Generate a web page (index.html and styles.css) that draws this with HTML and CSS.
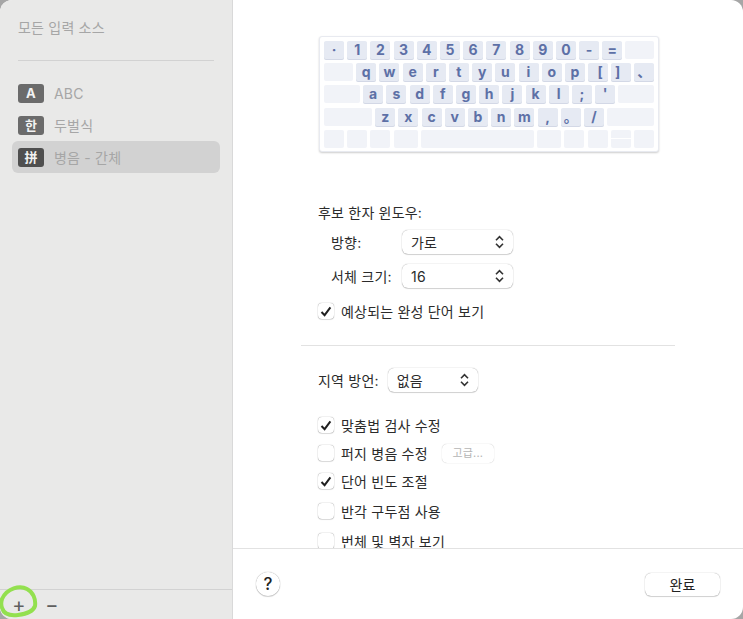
FILE: index.html
```html
<!DOCTYPE html>
<html lang="ko">
<head>
  <meta charset="UTF-8">
  <title>입력 소스</title>
  <link rel="stylesheet" href="styles.css">
</head>
<body>
  <div class="window">
    <aside class="sidebar">
      <div class="sidebar-title">모든 입력 소스</div>
      <div class="sidebar-rule"></div>
      <ul class="source-list">
        <li class="source"><span class="badge">A</span>ABC</li>
        <li class="source"><span class="badge">한</span>두벌식</li>
        <li class="source selected"><span class="badge">拼</span>병음 - 간체</li>
      </ul>
      <div class="sidebar-tools">
        <span class="tool">+</span>
        <span class="tool">−</span>
      </div>
      <svg class="marker" width="40" height="36" viewBox="0 0 40 36">
        <path d="M2 16 C7 5 20 2 27 6 C33 9 36 16 35 23 C33 29 26 31 18 32 C10 33 4 31 2 25 C1 22 1 19 2 16" fill="none" stroke="#93e04f" stroke-width="4" stroke-linecap="round"/>
      </svg>
    </aside>

    <main class="main">
      <div class="content">
        <div class="keyboard">
          <div class="kb-row">
            <span class="key">·</span><span class="key">1</span><span class="key">2</span><span class="key">3</span><span class="key">4</span><span class="key">5</span><span class="key">6</span><span class="key">7</span><span class="key">8</span><span class="key">9</span><span class="key">0</span><span class="key">-</span><span class="key">=</span><span class="key blank grow"></span>
          </div>
          <div class="kb-row">
            <span class="key blank w29"></span><span class="key">q</span><span class="key">w</span><span class="key">e</span><span class="key">r</span><span class="key">t</span><span class="key">y</span><span class="key">u</span><span class="key">i</span><span class="key">o</span><span class="key">p</span><span class="key bracket-l">[</span><span class="key bracket-r">]</span><span class="key grow">、</span>
          </div>
          <div class="kb-row">
            <span class="key blank w36"></span><span class="key">a</span><span class="key">s</span><span class="key">d</span><span class="key">f</span><span class="key">g</span><span class="key">h</span><span class="key">j</span><span class="key">k</span><span class="key">l</span><span class="key">;</span><span class="key">'</span><span class="key blank grow"></span>
          </div>
          <div class="kb-row">
            <span class="key blank w48"></span><span class="key">z</span><span class="key">x</span><span class="key">c</span><span class="key">v</span><span class="key">b</span><span class="key">n</span><span class="key">m</span><span class="key">,</span><span class="key">。</span><span class="key">/</span><span class="key blank grow"></span>
          </div>
          <div class="kb-row">
            <span class="key blank"></span><span class="key blank"></span><span class="key blank"></span><span class="key blank w24"></span><span class="key blank grow"></span><span class="key blank w24"></span><span class="key blank"></span><span class="key blank"></span>
            <span class="key blank split"></span><span class="key blank"></span>
          </div>
        </div>

        <div class="section-label">후보 한자 윈도우:</div>
        <div class="field">
          <span class="field-label">방향:</span>
          <span class="select wide">가로<svg class="updown" width="9" height="14" viewBox="0 0 9 14"><path d="M1 5.2 4.5 1.6 8 5.2M1 8.8 4.5 12.4 8 8.8" fill="none" stroke="#333" stroke-width="1.6"/></svg></span>
        </div>
        <div class="field">
          <span class="field-label">서체 크기:</span>
          <span class="select wide">16<svg class="updown" width="9" height="14" viewBox="0 0 9 14"><path d="M1 5.2 4.5 1.6 8 5.2M1 8.8 4.5 12.4 8 8.8" fill="none" stroke="#333" stroke-width="1.6"/></svg></span>
        </div>
        <label class="check first"><span class="box on"><svg width="12" height="11" viewBox="0 0 12 11"><path d="M1.5 6 4.6 9.2 10.4 1.4" fill="none" stroke="#1f1f1f" stroke-width="2"/></svg></span>예상되는 완성 단어 보기</label>

        <div class="rule"></div>

        <div class="dialect">
          <span>지역 방언:</span>
          <span class="select narrow">없음<svg class="updown" width="9" height="14" viewBox="0 0 9 14"><path d="M1 5.2 4.5 1.6 8 5.2M1 8.8 4.5 12.4 8 8.8" fill="none" stroke="#333" stroke-width="1.6"/></svg></span>
        </div>

        <div class="checks">
          <label class="check"><span class="box on"><svg width="12" height="11" viewBox="0 0 12 11"><path d="M1.5 6 4.6 9.2 10.4 1.4" fill="none" stroke="#1f1f1f" stroke-width="2"/></svg></span>맞춤법 검사 수정</label>
          <label class="check"><span class="box"></span>퍼지 병음 수정<span class="small-btn">고급...</span></label>
          <label class="check"><span class="box on"><svg width="12" height="11" viewBox="0 0 12 11"><path d="M1.5 6 4.6 9.2 10.4 1.4" fill="none" stroke="#1f1f1f" stroke-width="2"/></svg></span>단어 빈도 조절</label>
          <label class="check tall"><span class="box"></span>반각 구두점 사용</label>
          <label class="check tall"><span class="box"></span>번체 및 벽자 보기</label>
        </div>
      </div>

      <footer class="footer">
        <span class="help">?</span>
        <span class="done">완료</span>
      </footer>
    </main>
  </div>
</body>
</html>
```

FILE: styles.css
```css
* {
  box-sizing: border-box;
}
body {
  margin: 0;
  width: 743px;
  height: 619px;
  overflow: hidden;
  background-color: #a6a6a6;
  font-family: "Inter", "Noto Sans CJK KR", sans-serif;
  font-size: 14px;
  letter-spacing: 0.2px;
  color: #2b2b2b;
}
.window {
  display: flex;
  height: 619px;
  border-radius: 12px;
  overflow: hidden;
  background-color: white;
}

/* sidebar */
.sidebar {
  position: relative;
  display: flex;
  flex-direction: column;
  width: 233px;
  flex: none;
  background-color: #e9e9e8;
  border-right: 1px solid #d9d9d9;
}
.sidebar-title {
  margin: 18px 18px 0;
  line-height: 20px;
  color: #a6a6a6;
}
.sidebar-rule {
  height: 1px;
  margin: 22px 18px 0;
  background-color: #d2d2d2;
}
.source-list {
  list-style: none;
  margin: 16px 0 0;
  padding: 0 12px;
  flex: 1;
}
.source {
  display: flex;
  align-items: center;
  height: 32px;
  padding-left: 6px;
  color: #a6a6a6;
  border-radius: 6px;
}
.source.selected {
  background-color: #d2d2d2;
}
.badge {
  width: 26px;
  height: 19px;
  margin-right: 10px;
  border-radius: 3px;
  background-color: #6b6b6b;
  color: #f2f2f2;
  font-size: 13px;
  font-weight: 700;
  line-height: 19px;
  text-align: center;
}
.selected .badge {
  background-color: #4f4f4f;
}
.sidebar-tools {
  display: flex;
  align-items: center;
  height: 30px;
  border-top: 1px solid #d2d2d2;
  padding-left: 12px;
  gap: 19px;
}
.tool {
  width: 14px;
  font-size: 20px;
  line-height: 28px;
  text-align: center;
  color: #5f5f5f;
}
.marker {
  position: absolute;
  left: 0;
  bottom: 0;
}

/* main pane */
.main {
  flex: 1;
  display: flex;
  flex-direction: column;
  min-width: 0;
}
.content {
  height: 548px;
  overflow: hidden;
  padding: 36px 68px 0 68px;
}
.footer {
  display: flex;
  align-items: center;
  justify-content: space-between;
  height: 71px;
  border-top: 1px solid #e2e2e2;
  padding: 0 23px 0 23px;
}
.help {
  width: 24px;
  height: 24px;
  border-radius: 50%;
  background-color: white;
  box-shadow: 0 0 1px rgba(0,0,0,0.45), 0 1px 1px rgba(0,0,0,0.15);
  font-size: 17px;
  font-weight: 500;
  line-height: 24px;
  text-align: center;
  color: #222;
}
.done {
  width: 75px;
  height: 23px;
  border-radius: 6px;
  background-color: white;
  box-shadow: 0 0 1px rgba(0,0,0,0.45), 0 1px 1px rgba(0,0,0,0.15);
  line-height: 23px;
  text-align: center;
  color: #222;
}

/* keyboard picture */
.keyboard {
  display: flex;
  flex-direction: column;
  gap: 4.2px;
  width: 340px;
  height: 116px;
  margin-left: 18px;
  padding: 4px 4px 0;
  border: 1px solid #e8eaf0;
  border-radius: 3px;
  background-color: white;
  box-shadow: 0 1px 2px rgba(0,0,0,0.2);
}
.kb-row {
  display: flex;
  gap: 3.2px;
  height: 18px;
}
.key {
  flex: none;
  width: 20px;
  height: 18px;
  border-radius: 2px;
  background-color: #e6eaf3;
  box-shadow: 0 1px 0 #d3d8e6;
  color: #5d70a6;
  font-family: "Inter", "Liberation Sans", "Noto Sans CJK KR", sans-serif;
  font-size: 14px;
  font-weight: 700;
  line-height: 18px;
  letter-spacing: 0;
  text-align: center;
}
.key.blank {
  background-color: #f1f3f8;
  box-shadow: none;
}
.key.grow {
  flex: 1;
}
.key.w24 {
  width: 24px;
}
.key.w29 {
  width: 29px;
}
.key.w36 {
  width: 36px;
}
.key.w48 {
  width: 48px;
}
.key.split {
  background: linear-gradient(#f1f3f8 8px, white 8px, white 9px, #f1f3f8 9px);
}
.bracket-l {
  padding-left: 4px;
}
.bracket-r {
  padding-right: 7px;
}

/* options */
.section-label {
  margin: 51px 0 0 17px;
  line-height: 20px;
}
.field {
  display: flex;
  align-items: center;
  height: 24px;
  margin: 7px 0 0 30px;
}
.field + .field {
  margin-top: 10px;
}
.field-label {
  width: 71px;
}
.select {
  display: flex;
  align-items: center;
  justify-content: space-between;
  height: 24px;
  padding: 0 9px;
  border-radius: 6px;
  background-color: white;
  box-shadow: 0 0 1px rgba(0,0,0,0.45), 0 1px 1px rgba(0,0,0,0.15);
}
.wide {
  width: 111px;
}
.narrow {
  width: 90px;
}
.check {
  display: flex;
  align-items: center;
  height: 20px;
  margin-left: 17px;
}
.check.first {
  margin-top: 13px;
}
.box {
  display: flex;
  align-items: center;
  justify-content: center;
  width: 16px;
  height: 16px;
  margin-right: 7px;
  border-radius: 4px;
  background-color: white;
  box-shadow: 0 0 1px rgba(0,0,0,0.55), 0 1px 1px rgba(0,0,0,0.1);
}
.small-btn {
  width: 52px;
  height: 19px;
  margin-left: 14px;
  border-radius: 5px;
  background-color: white;
  box-shadow: 0 0 1px rgba(0,0,0,0.3);
  color: #b5b5b5;
  font-size: 11px;
  line-height: 19px;
  text-align: center;
}
.rule {
  height: 1px;
  margin: 24px 0 0 0;
  background-color: #e2e2e2;
}
.dialect {
  display: flex;
  align-items: center;
  gap: 9px;
  margin: 22px 0 0 17px;
}
.checks {
  display: flex;
  flex-direction: column;
  gap: 8px;
  margin-top: 23px;
}
.check.tall {
  margin-top: 2px;
}
```
